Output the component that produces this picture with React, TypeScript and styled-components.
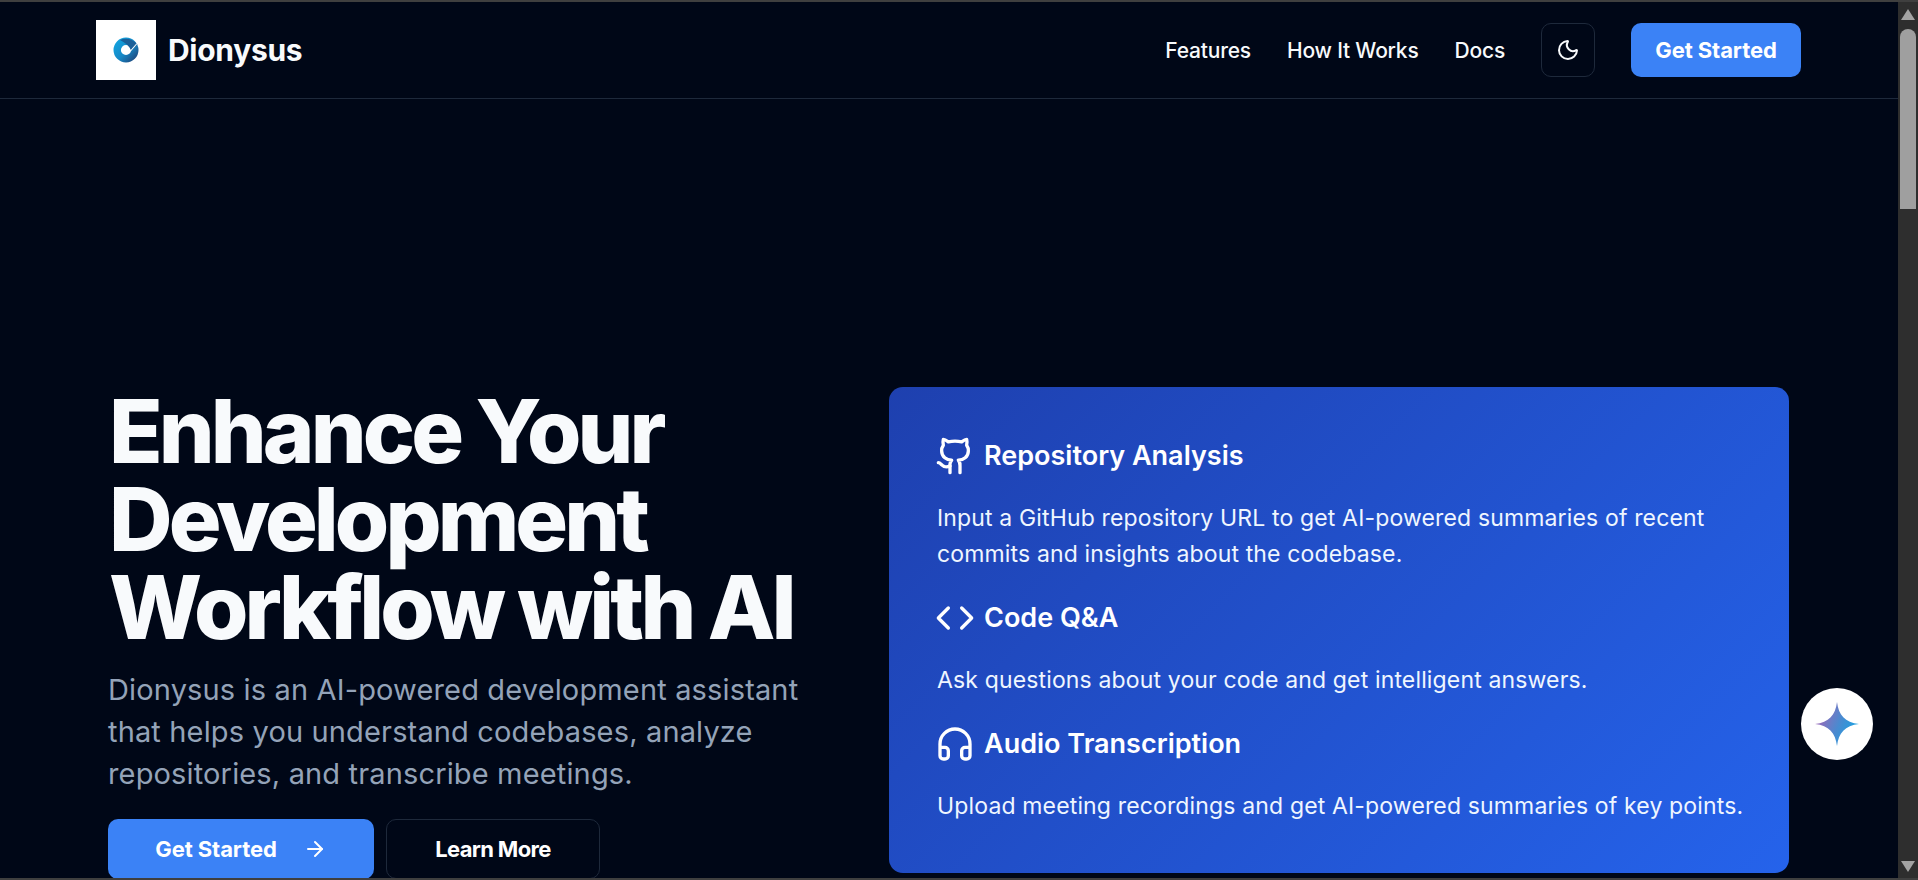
import React from "react";
import styled, { createGlobalStyle } from "styled-components";
import { ArrowRight, Code, Github, Headphones, Moon } from "lucide-react";

const GlobalStyle = createGlobalStyle`
  html, body {
    margin: 0;
    height: 100%;
    overflow: hidden;
    background: #000717;
  }
  * {
    box-sizing: border-box;
  }
`;

const features = [
  {
    icon: <Github size={40} />,
    title: "Repository Analysis",
    text: "Input a GitHub repository URL to get AI-powered summaries of recent commits and insights about the codebase.",
  },
  {
    icon: <Code size={40} />,
    title: "Code Q&A",
    text: "Ask questions about your code and get intelligent answers.",
  },
  {
    icon: <Headphones size={40} />,
    title: "Audio Transcription",
    text: "Upload meeting recordings and get AI-powered summaries of key points.",
  },
];

const LogoMark = () => (
  <svg width="26" height="26" viewBox="0 0 26 26">
    <defs>
      <linearGradient id="ringGrad" x1="0" y1="0" x2="1" y2="1">
        <stop offset="0" stopColor="#12a0dc" />
        <stop offset="0.55" stopColor="#1688c6" />
        <stop offset="1" stopColor="#1d4f86" />
      </linearGradient>
    </defs>
    <circle cx="13" cy="13" r="8.8" fill="none" stroke="url(#ringGrad)" strokeWidth="7.4" />
    <path d="M7 3 C13 0.5 20 2 24.5 7.5 L18 13.5 C17 10 13 6 7 3 Z" fill="#1b5f98" />
    <path d="M17.5 14 L24 6.5" stroke="#ffffff" strokeWidth="1.1" />
  </svg>
);

const Sparkle = () => (
  <svg width="44" height="44" viewBox="0 0 44 44">
    <defs>
      <linearGradient id="sparkGrad" x1="0" y1="0.25" x2="1" y2="0.65">
        <stop offset="0.1" stopColor="#9a68b8" />
        <stop offset="0.55" stopColor="#4a8ad0" />
        <stop offset="1" stopColor="#14a5e4" />
      </linearGradient>
    </defs>
    <path
      d="M22 0 C23.5 13 30 20.5 44 22 C30 23.5 23.5 31 22 44 C20.5 31 14 23.5 0 22 C14 20.5 20.5 13 22 0 Z"
      fill="url(#sparkGrad)"
    />
  </svg>
);

export default function App() {
  return (
    <>
      <GlobalStyle />
      <Frame>
        <Page>
          <Header>
            <Brand>
              <LogoBox>
                <LogoMark />
              </LogoBox>
              <BrandName>Dionysus</BrandName>
            </Brand>
            <Nav>
              <NavLink>Features</NavLink>
              <NavLink>How It Works</NavLink>
              <NavLink>Docs</NavLink>
              <ThemeButton>
                <Moon size={24} strokeWidth={2} />
              </ThemeButton>
              <HeaderCta>Get Started</HeaderCta>
            </Nav>
          </Header>
          <Hero>
            <HeroCopy>
              <Title>Enhance Your Development Workflow with AI</Title>
              <Lead>
                Dionysus is an AI-powered development assistant that helps you understand codebases,
                analyze repositories, and transcribe meetings.
              </Lead>
              <Actions>
                <PrimaryButton>
                  Get Started
                  <ArrowRight size={24} />
                </PrimaryButton>
                <OutlineButton>Learn More</OutlineButton>
              </Actions>
            </HeroCopy>
            <FeatureCard>
              {features.map((f) => (
                <Feature key={f.title}>
                  <FeatureHead>
                    {f.icon}
                    <FeatureTitle>{f.title}</FeatureTitle>
                  </FeatureHead>
                  <FeatureText>{f.text}</FeatureText>
                </Feature>
              ))}
            </FeatureCard>
          </Hero>
          <ChatBubble>
            <Sparkle />
          </ChatBubble>
        </Page>
        <ScrollRail>
          <ArrowUp />
          <ScrollTrack>
            <ScrollThumb />
          </ScrollTrack>
          <ArrowDown />
        </ScrollRail>
      </Frame>
    </>
  );
}

const Frame = styled.div`
  display: flex;
  width: 100vw;
  height: 100vh;
  overflow: hidden;
  border-top: 2px solid #3f3f3f;
  border-bottom: 2px solid #3f3f3f;
  font-family: Inter, "Liberation Sans", sans-serif;
  color: #f8fafc;
`;

const Page = styled.main`
  position: relative;
  flex: 1;
  min-width: 0;
  overflow: hidden;
  background: #000717;
`;

const Header = styled.header`
  display: flex;
  justify-content: space-between;
  align-items: center;
  height: 97px;
  padding: 0 97px 0 96px;
  border-bottom: 1px solid #1e293b;
`;

const Brand = styled.div`
  display: flex;
  align-items: center;
  gap: 12px;
`;

const LogoBox = styled.div`
  display: flex;
  align-items: center;
  justify-content: center;
  width: 60px;
  height: 60px;
  background: #ffffff;
`;

const BrandName = styled.span`
  font-size: 30px;
  font-weight: 700;
  letter-spacing: -0.3px;
`;

const Nav = styled.nav`
  display: flex;
  align-items: center;
`;

const NavLink = styled.a`
  margin-right: 36px;
  font-size: 21px;
  font-weight: 500;
  letter-spacing: -0.2px;
`;

const ThemeButton = styled.button`
  display: flex;
  align-items: center;
  justify-content: center;
  width: 54px;
  height: 54px;
  margin-right: 36px;
  padding: 0;
  background: transparent;
  border: 1px solid #1e293b;
  border-radius: 10px;
  color: #f8fafc;
`;

const HeaderCta = styled.button`
  width: 170px;
  height: 54px;
  background: #3b82f6;
  border: 0;
  border-radius: 10px;
  color: #ffffff;
  font-family: inherit;
  font-size: 22px;
  font-weight: 700;
  letter-spacing: -0.1px;
`;

const Hero = styled.section`
  display: grid;
  grid-template-columns: 781px 900px;
  padding: 288px 0 0 108px;
`;

const HeroCopy = styled.div`
  display: flex;
  flex-direction: column;
`;

const Title = styled.h1`
  width: 740px;
  margin: 0 0 0 1px;
  font-size: 88px;
  line-height: 88px;
  font-weight: 800;
  letter-spacing: -3.9px;
`;

const Lead = styled.p`
  width: 720px;
  margin: 18px 0 0;
  color: #94a3b8;
  font-size: 29px;
  line-height: 42px;
  letter-spacing: 0.15px;
`;

const Actions = styled.div`
  display: flex;
  gap: 12px;
  margin-top: 24px;
`;

const PrimaryButton = styled.button`
  display: flex;
  align-items: center;
  justify-content: center;
  gap: 26px;
  width: 266px;
  height: 60px;
  background: #3b82f6;
  border: 0;
  border-radius: 10px;
  color: #ffffff;
  font-family: inherit;
  font-size: 22px;
  font-weight: 700;
  letter-spacing: -0.1px;
`;

const OutlineButton = styled.button`
  width: 214px;
  height: 60px;
  background: transparent;
  border: 1px solid #1e293b;
  border-radius: 10px;
  color: #ffffff;
  font-family: inherit;
  font-size: 22px;
  font-weight: 700;
  letter-spacing: -0.65px;
`;

const FeatureCard = styled.div`
  display: flex;
  flex-direction: column;
  height: 486px;
  padding: 49px 30px 49px 46px;
  border-radius: 14px;
  background: linear-gradient(135deg, #1e40af, #2563eb);
`;

const Feature = styled.div`
  display: flex;
  flex-direction: column;
`;

const FeatureHead = styled.div`
  display: flex;
  align-items: center;
  gap: 9px;
  color: #ffffff;
`;

const FeatureTitle = styled.h3`
  margin: 0;
  font-size: 27px;
  line-height: 32px;
  font-weight: 600;
`;

const FeatureText = styled.p`
  margin: 24px 0 26px 2px;
  color: #eff6ff;
  font-size: 23px;
  line-height: 36px;
  letter-spacing: 0.15px;
`;

const ChatBubble = styled.div`
  position: absolute;
  top: 686px;
  left: 1801px;
  display: flex;
  align-items: center;
  justify-content: center;
  width: 72px;
  height: 72px;
  border-radius: 50%;
  background: #ffffff;
`;

const ScrollRail = styled.aside`
  display: flex;
  flex-direction: column;
  align-items: center;
  flex: 0 0 20px;
  padding: 7px 0 6px;
  background: #2e2e2e;
`;

const ArrowUp = styled.div`
  width: 0;
  height: 0;
  border-left: 7px solid transparent;
  border-right: 7px solid transparent;
  border-bottom: 11px solid #a3a3a3;
`;

const ArrowDown = styled.div`
  width: 0;
  height: 0;
  border-left: 7px solid transparent;
  border-right: 7px solid transparent;
  border-top: 11px solid #a3a3a3;
`;

const ScrollTrack = styled.div`
  flex: 1;
  width: 100%;
  padding: 9px 2px 0;
`;

const ScrollThumb = styled.div`
  height: 180px;
  border-radius: 8px 8px 0 0;
  background: #9f9f9f;
`;
